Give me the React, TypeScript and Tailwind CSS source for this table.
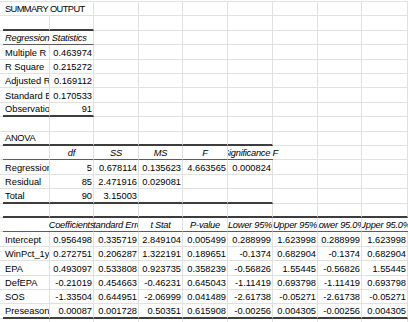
import clsx from "clsx";

type Cell = {
  t?: string;
  a?: "l" | "r" | "c";
  i?: boolean;
  clip?: "both" | "left" | "right" | "none";
  nr?: boolean;
  tr?: string;
};

type Row = {
  cells: Cell[];
  bot?: { kind: "thick" | "thin"; to: number };
};

// column widths, A..I (spacer column in front)
const WIDTHS = [
  "w-[47px]",
  "w-[44px]",
  "w-[45px]",
  "w-[44px]",
  "w-[45px]",
  "w-[45px]",
  "w-[45px]",
  "w-[44px]",
  "w-[46px]",
];

const HEIGHTS = [14, 15, 14, 15, 14, 14, 15, 14, 15, 14, 14, 15, 14, 15, 14, 14, 15, 14, 15, 14, 14, 15];

const L = (t: string): Cell => ({ t, a: "l" });
const R = (t: string | number): Cell => ({ t: String(t), a: "r" });
const H = (t: string, extra: Partial<Cell> = {}): Cell => ({ t, a: "c", i: true, ...extra });

const coef: [string, ...string[]][] = [
  ["Intercept", "0.956498", "0.335719", "2.849104", "0.005499", "0.288999", "1.623998", "0.288999", "1.623998"],
  ["WinPct_1yr", "0.272751", "0.206287", "1.322191", "0.189651", "-0.1374", "0.682904", "-0.1374", "0.682904"],
  ["EPA", "0.493097", "0.533808", "0.923735", "0.358239", "-0.56826", "1.55445", "-0.56826", "1.55445"],
  ["DefEPA", "-0.21019", "0.454663", "-0.46231", "0.645043", "-1.11419", "0.693798", "-1.11419", "0.693798"],
  ["SOS", "-1.33504", "0.644951", "-2.06999", "0.041489", "-2.61738", "-0.05271", "-2.61738", "-0.05271"],
  ["Preseason", "0.00087", "0.001728", "0.50351", "0.615908", "-0.00256", "0.004305", "-0.00256", "0.004305"],
];

const ROWS: Row[] = [
  { cells: [{ t: "SUMMARY OUTPUT", a: "l", clip: "none", nr: true, tr: "tracking-[-0.6px]" }] },
  { cells: [], bot: { kind: "thick", to: 1 } },
  {
    cells: [{ t: "Regression Statistics", a: "l", i: true, clip: "none", nr: true }],
    bot: { kind: "thin", to: 1 },
  },
  { cells: [L("Multiple R"), R("0.463974")] },
  { cells: [L("R Square"), R("0.215272")] },
  { cells: [L("Adjusted R Square"), R("0.169112")] },
  { cells: [L("Standard Error"), R("0.170533")] },
  { cells: [L("Observations"), R(91)], bot: { kind: "thick", to: 1 } },
  { cells: [] },
  { cells: [{ ...L("ANOVA"), tr: "tracking-[-0.3px]" }], bot: { kind: "thick", to: 5 } },
  {
    cells: [{}, H("df"), H("SS"), H("MS"), H("F"), H("Significance F", { clip: "left", nr: true })],
    bot: { kind: "thin", to: 5 },
  },
  { cells: [L("Regression"), R(5), R("0.678114"), R("0.135623"), R("4.663565"), R("0.000824")] },
  { cells: [L("Residual"), R(85), R("2.471916"), R("0.029081")] },
  { cells: [L("Total"), R(90), R("3.15003")], bot: { kind: "thick", to: 5 } },
  { cells: [], bot: { kind: "thick", to: 8 } },
  {
    cells: [
      { nr: true },
      H("Coefficients", { clip: "right" }),
      H("Standard Error"),
      H("t Stat"),
      H("P-value"),
      H("Lower 95%"),
      H("Upper 95%"),
      H("Lower 95.0%"),
      H("Upper 95.0%", { clip: "left", nr: true }),
    ],
    bot: { kind: "thin", to: 8 },
  },
  ...coef.map((r, idx) => ({
    cells: [L(r[0]), ...r.slice(1).map((v) => R(v))],
    bot: idx === coef.length - 1 ? { kind: "thick" as const, to: 8 } : undefined,
  })),
];

function SheetCell({ cell, width, bottom }: { cell: Cell; width: string; bottom: "grid" | "thick" | "thin" }) {
  const clip = cell.clip ?? "both";
  return (
    <div
      className={clsx(
        "flex h-full shrink-0 items-end",
        width,
        !cell.nr && "border-r border-r-[#e1e1e1]",
        bottom === "grid" && "border-b border-b-[#e1e1e1]",
        bottom === "thick" && "border-b-2 border-b-[#3d3d3d]",
        bottom === "thin" && "border-b border-b-[#5c5c5c]",
        cell.a === "r" && "justify-end pr-[1px]",
        cell.a === "c" && "justify-center",
        (cell.a === "l" || !cell.a) && "justify-start pl-[2px]",
        clip === "both" && "overflow-hidden",
        clip === "left" && "[clip-path:inset(0_-60px_0_0)]",
        clip === "right" && "[clip-path:inset(0_0_0_-60px)]"
      )}
    >
      {cell.t ? (
        <span
          className={clsx(
            "shrink-0 whitespace-nowrap leading-[11px]",
            cell.i && "italic tracking-[-0.25px]",
            cell.tr
          )}
        >
          {cell.t}
        </span>
      ) : null}
    </div>
  );
}

export default function App() {
  return (
    <div className="h-[322px] w-[408px] overflow-hidden bg-white font-['Liberation_Sans',Arial,sans-serif] text-[9.3px] text-black">
      <div className="flex h-[2px]">
        <div className="w-full border-b border-b-[#e1e1e1]" />
      </div>
      {ROWS.map((row, r) => (
        <div key={r} className={clsx("flex", HEIGHTS[r] === 15 ? "h-[15px]" : "h-[14px]")}>
          <div className="h-full w-[3px] shrink-0 border-b border-b-[#e1e1e1]" />
          {WIDTHS.map((w, c) => (
            <SheetCell
              key={c}
              cell={row.cells[c] ?? {}}
              width={w}
              bottom={row.bot && c <= row.bot.to ? row.bot.kind : "grid"}
            />
          ))}
        </div>
      ))}
      <div className="flex h-[3px]">
        <div className="w-[3px] shrink-0" />
        {WIDTHS.map((w, c) => (
          <div key={c} className={clsx("h-full shrink-0 border-r border-r-[#e1e1e1]", w)} />
        ))}
      </div>
    </div>
  );
}
